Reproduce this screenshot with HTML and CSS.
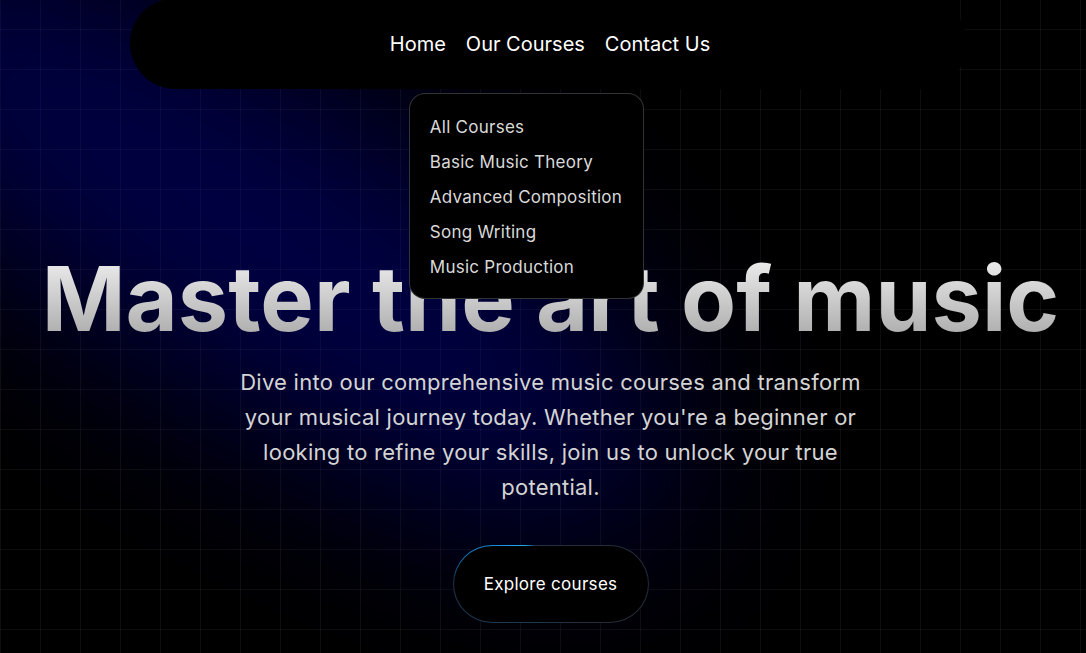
FILE: index.html
```html
<!DOCTYPE html>
<html lang="en">
<head>
<meta charset="utf-8">
<title>Music School</title>
<link rel="stylesheet" href="styles.css">
</head>
<body>
<div class="page">
  <div class="spotlight"></div>
  <header class="nav-wrap">
    <nav class="nav">
      <a class="nav-link" href="#">Home</a>
      <div class="nav-item">
        <a class="nav-link" href="#">Our Courses</a>
        <div class="dropdown">
          <a href="#">All Courses</a>
          <a href="#">Basic Music Theory</a>
          <a href="#">Advanced Composition</a>
          <a href="#">Song Writing</a>
          <a href="#">Music Production</a>
        </div>
      </div>
      <a class="nav-link" href="#">Contact Us</a>
    </nav>
  </header>
  <main class="hero">
    <h1 class="title">Master the art of music</h1>
    <p class="lead">Dive into our comprehensive music courses and transform your musical journey today. Whether you're a beginner or looking to refine your skills, join us to unlock your true potential.</p>
    <a class="cta" href="#"><span>Explore courses</span></a>
  </main>
</div>
</body>
</html>
```
FILE: styles.css
```css
* { box-sizing: border-box; }
html, body { margin: 0; padding: 0; background: #000; }
body { font-family: Inter, "Noto Sans", sans-serif; color: #fff; }
a { text-decoration: none; color: inherit; }

.page {
  position: relative;
  width: 100%;
  height: 653px;
  overflow: hidden;
  background-color: #000;
  background-image:
    linear-gradient(to right, rgba(255,255,255,0.05) 1px, transparent 1px),
    linear-gradient(to bottom, rgba(255,255,255,0.05) 1px, transparent 1px);
  background-size: 40px 40px;
  background-position: 0 29px;
}

.spotlight {
  position: absolute;
  left: -250px;
  top: 70px;
  width: 1000px;
  height: 320px;
  border-radius: 50%;
  background: rgba(0, 0, 210, 0.32);
  transform: rotate(32deg);
  filter: blur(90px);
  pointer-events: none;
}

.nav-wrap {
  position: relative;
  z-index: 5;
  display: flex;
  justify-content: center;
  padding-left: 11px;
}
.nav {
  width: 837px;
  height: 91px;
  margin-top: -2px;
  background: #000;
  border-radius: 46px;
  display: flex;
  justify-content: center;
  align-items: center;
  gap: 20px;
  padding-left: 3px;
}
.nav-link {
  display: block;
  font-size: 20px;
  line-height: 24px;
  color: #fff;
}
.nav-item { position: relative; }
.dropdown {
  position: absolute;
  top: calc(100% + 37px);
  left: -57px;
  width: 235px;
  padding: 16px 20px 13px;
  background: #000;
  border: 1px solid rgba(255,255,255,0.2);
  border-radius: 16px;
  display: flex;
  flex-direction: column;
}
.dropdown a {
  font-size: 17px;
  line-height: 35px;
  letter-spacing: 0.25px;
  color: #d9d9d9;
  white-space: nowrap;
}

.hero {
  position: relative;
  z-index: 1;
  display: flex;
  flex-direction: column;
  align-items: center;
  text-align: center;
  padding-top: 160px;
  padding-left: 15px;
}
.title {
  margin: 0;
  font-size: 90px;
  font-weight: 700;
  line-height: 99px;
  white-space: nowrap;
  background: linear-gradient(to bottom, #f5f5f5, #a3a3a3);
  -webkit-background-clip: text;
  background-clip: text;
  color: transparent;
}
.lead {
  margin: 17px 0 0;
  max-width: 640px;
  font-size: 22px;
  line-height: 35px;
  letter-spacing: 0.25px;
  color: #d4d4d4;
}
.cta {
  margin-top: 40px;
  display: flex;
  align-items: center;
  justify-content: center;
  width: 196px;
  height: 78px;
  border-radius: 39px;
  border: 1px solid transparent;
  background:
    linear-gradient(#000, #000) padding-box,
    conic-gradient(from 270deg, #1f3042 0deg, #0d6aa8 15deg, #1ea0ee 45deg, #1fa6f0 55deg, #1f3042 68deg, #232b36 200deg, #1b3a55 320deg, #1f3042 360deg) border-box;
  font-size: 17px;
  letter-spacing: 0.3px;
  color: #fff;
}
```
